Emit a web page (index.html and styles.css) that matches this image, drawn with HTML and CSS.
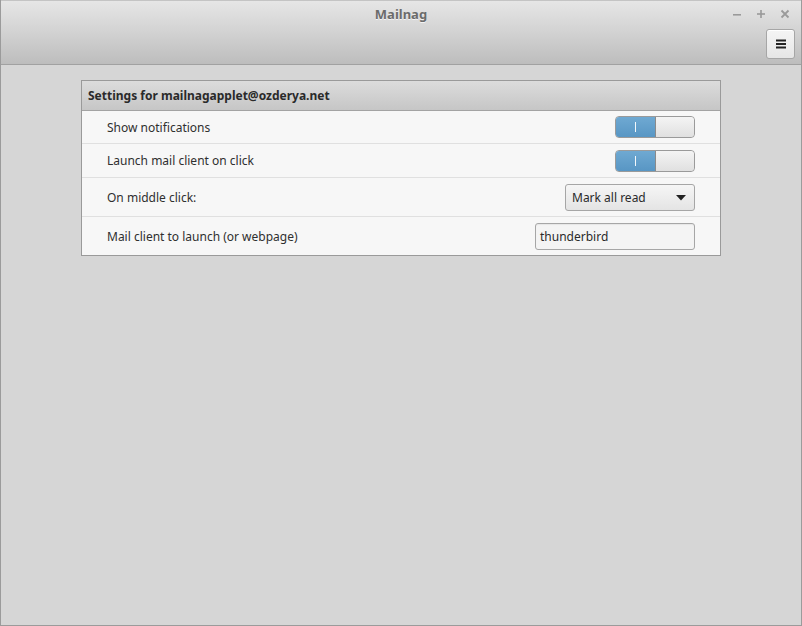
FILE: index.html
```html
<!DOCTYPE html>
<html>
<head>
<meta charset="utf-8">
<link rel="stylesheet" href="styles.css">
</head>
<body>
<div class="window">
  <div class="header">
    <div class="titlebar">
      <div class="title">Mailnag</div>
      <div class="controls">
        <span class="ctl">
          <svg width="10" height="10" viewBox="0 0 10 10"><rect x="1" y="5" width="8" height="1.6" fill="#9a9a9a"/></svg>
        </span>
        <span class="ctl">
          <svg width="10" height="10" viewBox="0 0 10 10"><rect x="1" y="4.2" width="8" height="1.6" fill="#9a9a9a"/><rect x="4.2" y="1" width="1.6" height="8" fill="#9a9a9a"/></svg>
        </span>
        <span class="ctl">
          <svg width="10" height="10" viewBox="0 0 10 10"><path d="M1.5 1.5 L8.5 8.5 M8.5 1.5 L1.5 8.5" stroke="#9a9a9a" stroke-width="1.8"/></svg>
        </span>
      </div>
    </div>
    <div class="toolbar">
      <button class="menubtn">
        <svg width="10" height="10" viewBox="0 0 10 10"><rect x="0" y="0.5" width="10" height="2" fill="#222"/><rect x="0" y="4" width="10" height="2" fill="#222"/><rect x="0" y="7.5" width="10" height="2" fill="#222"/></svg>
      </button>
    </div>
  </div>
  <div class="content">
    <div class="frame">
      <div class="frame-head">Settings for mailnagapplet@ozderya.net</div>
      <div class="row r1">
        <span class="label">Show notifications</span>
        <div class="switch"><div class="on"><span class="bar"></span></div><div class="knob"></div></div>
      </div>
      <div class="row r2">
        <span class="label">Launch mail client on click</span>
        <div class="switch"><div class="on"><span class="bar"></span></div><div class="knob"></div></div>
      </div>
      <div class="row r3">
        <span class="label">On middle click:</span>
        <div class="combo"><span>Mark all read</span>
          <svg width="10" height="6" viewBox="0 0 10 6"><path d="M0 0 L10 0 L5 5.5 Z" fill="#222"/></svg>
        </div>
      </div>
      <div class="row r4">
        <span class="label">Mail client to launch (or webpage)</span>
        <div class="entry">thunderbird</div>
      </div>
    </div>
  </div>
</div>
</body>
</html>
```

FILE: styles.css
```css
* { box-sizing: border-box; }
html, body { margin: 0; padding: 0; }
body {
  width: 802px;
  height: 626px;
  font-family: "Noto Sans", "Open Sans", sans-serif;
  font-size: 12px;
  color: #2f2f2f;
  overflow: hidden;
}
.window {
  width: 802px;
  height: 626px;
  border: 1px solid #9b9b9b;
  border-top: none;
  background: #d6d6d6;
  display: flex;
  flex-direction: column;
}
.header {
  height: 65px;
  background: linear-gradient(to bottom, #e6e6e6 0%, #d2d2d2 50%, #bdbdbd 100%);
  border-bottom: 1px solid #a1a1a1;
  border-top: 1px solid #c4c4c4;
  display: flex;
  flex-direction: column;
}
.titlebar {
  height: 27px;
  display: flex;
  align-items: center;
  justify-content: center;
  position: relative;
}
.title {
  font-weight: bold;
  font-size: 13px;
  color: #6b6b6b;
  text-shadow: 0 1px 0 rgba(255,255,255,0.7);
  margin-top: -1px;
}
.controls {
  position: absolute;
  right: 11px;
  top: 8px;
  display: flex;
  gap: 14px;
}
.ctl { display: flex; width: 10px; height: 10px; }
.toolbar {
  flex: 1;
  display: flex;
  justify-content: flex-end;
  align-items: flex-start;
  padding-right: 6px;
  padding-top: 1px;
}
.menubtn {
  width: 29px;
  height: 30px;
  border: 1px solid #a6a6a6;
  border-radius: 3px;
  background: linear-gradient(to bottom, #f5f5f5, #e6e6e6);
  display: flex;
  align-items: center;
  justify-content: center;
  padding: 0;
  box-shadow: inset 0 1px 0 #fff;
}
.content {
  flex: 1;
  padding: 15px 0 0 80px;
}
.frame {
  width: 640px;
  border: 1px solid #9a9a9a;
  background: #f7f7f7;
}
.frame-head {
  height: 30px;
  background: linear-gradient(to bottom, #dcdcdc, #c6c6c6);
  border-bottom: 1px solid #a3a3a3;
  font-weight: bold;
  font-size: 12px;
  color: #2a2a2a;
  display: flex;
  align-items: center;
  padding-left: 6px;
}
.row {
  display: flex;
  align-items: center;
  justify-content: space-between;
  padding: 0 25px 0 25px;
  border-bottom: 1px solid #e0e0e0;
}
.row:last-child { border-bottom: none; }
.r1 { height: 33px; }
.r2 { height: 34px; }
.r3 { height: 39px; }
.r4 { height: 38px; }
.label { font-size: 12px; color: #2f2f2f; }
.switch {
  width: 80px;
  height: 22px;
  border: 1px solid #9a9a9a;
  border-radius: 4px;
  display: flex;
  overflow: hidden;
  background: linear-gradient(to bottom, #f2f2f2, #dedede);
}
.switch .on {
  width: 40px;
  background: linear-gradient(to bottom, #6fa9d2, #5896c4);
  display: flex;
  align-items: center;
  justify-content: center;
  border-right: 1px solid #8a8a8a;
}
.switch .bar {
  width: 1.5px;
  height: 10px;
  background: #f4f8fb;
}
.switch .knob {
  flex: 1;
  background: linear-gradient(to bottom, #f4f4f4, #e0e0e0);
  border-radius: 0 3px 3px 0;
}
.combo {
  width: 130px;
  height: 27px;
  border: 1px solid #a6a6a6;
  border-radius: 3px;
  background: linear-gradient(to bottom, #f6f6f6, #e4e4e4);
  display: flex;
  align-items: center;
  justify-content: space-between;
  padding: 0 8px 0 6px;
  font-size: 12px;
  color: #2a2a2a;
  margin-top: 1px;
}
.entry {
  width: 160px;
  height: 27px;
  border: 1px solid #a6a6a6;
  border-radius: 3px;
  background: #f4f4f4;
  display: flex;
  align-items: center;
  padding-left: 4px;
  font-size: 12px;
  color: #2a2a2a;
  box-shadow: inset 0 1px 1px rgba(0,0,0,0.06);
}
```
